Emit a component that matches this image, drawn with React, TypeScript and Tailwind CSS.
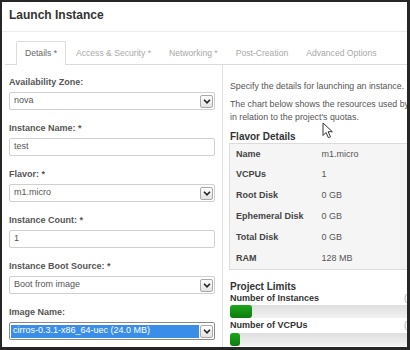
import type { ReactNode } from 'react'

type Field = {
  label: string
  required?: boolean
  kind: 'select' | 'input'
  value: string
  highlighted?: boolean
}

const fields: Field[] = [
  { label: 'Availability Zone:', kind: 'select', value: 'nova' },
  { label: 'Instance Name:', required: true, kind: 'input', value: 'test' },
  { label: 'Flavor:', required: true, kind: 'select', value: 'm1.micro' },
  { label: 'Instance Count:', required: true, kind: 'input', value: '1' },
  { label: 'Instance Boot Source:', required: true, kind: 'select', value: 'Boot from image' },
  { label: 'Image Name:', kind: 'select', value: 'cirros-0.3.1-x86_64-uec (24.0 MB)', highlighted: true },
]

const tabs = [
  { label: 'Details *', active: true },
  { label: 'Access & Security *' },
  { label: 'Networking *' },
  { label: 'Post-Creation' },
  { label: 'Advanced Options' },
]

const flavor = [
  ['Name', 'm1.micro'],
  ['VCPUs', '1'],
  ['Root Disk', '0 GB'],
  ['Ephemeral Disk', '0 GB'],
  ['Total Disk', '0 GB'],
  ['RAM', '128 MB'],
]

const limits = [
  { label: 'Number of Instances', fill: 22 },
  { label: 'Number of VCPUs', fill: 10 },
]

function Chevron() {
  return (
    <span className="flex h-[13px] w-[13px] shrink-0 items-center justify-center rounded-[2px] border border-[#a9a9a9] bg-linear-to-b from-white to-[#e2e2e2]">
      <svg width="8" height="5" viewBox="0 0 8 5">
        <path d="M1 0.8l3 3 3-3" fill="none" stroke="#222" strokeWidth="1.6" />
      </svg>
    </span>
  )
}

function Box({ field }: { field: Field }) {
  let inner: ReactNode
  if (field.highlighted) {
    inner = (
      <span className="mr-[1px] flex h-[13px] flex-1 items-center bg-[#3b8ee8] pl-[2px] text-white">
        {field.value}
      </span>
    )
  } else {
    inner = <span className="flex-1 pl-[3px]">{field.value}</span>
  }
  return (
    <div
      className={`flex h-[18px] w-[206px] items-center rounded-[2px] border pl-[1px] pr-[1px] text-[9px] text-[#555] ${
        field.highlighted ? 'border-[#8a8a8a]' : 'border-[#d0d0d0]'
      }`}
    >
      {inner}
      {field.kind === 'select' && <Chevron />}
    </div>
  )
}

export default function App() {
  return (
    <div className="relative h-[350px] w-[410px] overflow-hidden border-t-2 border-r-[3px] border-b-[3px] border-l-2 border-[#262626] bg-white font-['Liberation_Sans',Arial,sans-serif]">
      {/* Header */}
      <div className="h-[30px] border-b border-[#ececec] pl-[7px] pt-[7px]">
        <h1 className="text-[12px] leading-[12px] font-bold text-[#333]">Launch Instance</h1>
      </div>

      {/* Tabs */}
      <div className="pt-[9px]">
        <ul className="ml-[3px] flex h-[24px] border-b border-[#dcdcdc] pl-[11px]">
          {tabs.map((t) => (
            <li
              key={t.label}
              className={`mr-[2px] flex h-[24px] items-center whitespace-nowrap px-[8px] text-[8.6px] ${
                t.active
                  ? 'rounded-t-[2px] border border-b-0 border-[#dcdcdc] bg-white text-[#666]'
                  : 'text-[#a8a8a8]'
              }`}
            >
              {t.label}
            </li>
          ))}
        </ul>
      </div>

      <div className="flex">
        {/* Left column */}
        <div className="w-[221px] shrink-0 border-r border-[#e2e2e2] pl-[7px] pt-[12px]">
          {fields.map((f) => (
            <div key={f.label} className="mb-[13px]">
              <label className="mb-[5px] block text-[9px] leading-[10px] font-bold text-[#555]">
                {f.label}
                {f.required && ' *'}
              </label>
              <Box field={f} />
            </div>
          ))}
        </div>

        {/* Right column */}
        <div className="w-[240px] shrink-0 pl-[7px] pt-[15px] text-[8.8px] text-[#555]">
          <p className="leading-[13px]">Specify the details for launching an instance.</p>
          <p className="mt-[5px] leading-[13px] whitespace-nowrap">
            The chart below shows the resources used by
            <br />
            in relation to the project's quotas.
          </p>
          <h3 className="mt-[7px] text-[10px] leading-[12px] font-bold text-[#333]">Flavor Details</h3>
          <table className="-ml-[1px] w-[220px] border-collapse border border-[#dcdcdc] bg-[#f5f5f5] text-[9px]">
            <tbody>
              {flavor.map(([k, v]) => (
                <tr key={k} className="h-[21px]">
                  <td className="w-[92px] pl-[6px] font-bold text-[#444]">{k}</td>
                  <td className="text-[#555]">{v}</td>
                </tr>
              ))}
            </tbody>
          </table>

          <h3 className="mt-[11px] text-[10px] leading-[12px] font-bold text-[#333]">Project Limits</h3>
          {limits.map((l, i) => (
            <div key={l.label} className={i === 0 ? '' : 'mt-[2px]'}>
              <div className="flex text-[9px] leading-[11px]">
                <span className="w-[174px] shrink-0 font-bold text-[#333]">{l.label}</span>
                <span className="text-[#aaa]">(</span>
              </div>
              <div className={`${i === 0 ? 'mt-[1px]' : 'mt-[2px]'} h-[13px] w-[230px] rounded-[3px] bg-linear-to-b from-[#dedede] to-[#f2f2f2]`}>
                <div
                  className="h-full rounded-[3px] bg-linear-to-b from-[#1ea51e] to-[#0d7d0d]"
                  style={{ width: l.fill }}
                />
              </div>
            </div>
          ))}
        </div>
      </div>

      {/* Mouse pointer over the page */}
      <svg className="absolute left-[320px] top-[120px]" width="12" height="17" viewBox="0 0 12 17">
        <path d="M1 1v12.5l3-3 2.4 5.2 2.1-1-2.4-5h4.2z" fill="#fff" stroke="#333" strokeWidth="1" strokeLinejoin="round" />
      </svg>
    </div>
  )
}
